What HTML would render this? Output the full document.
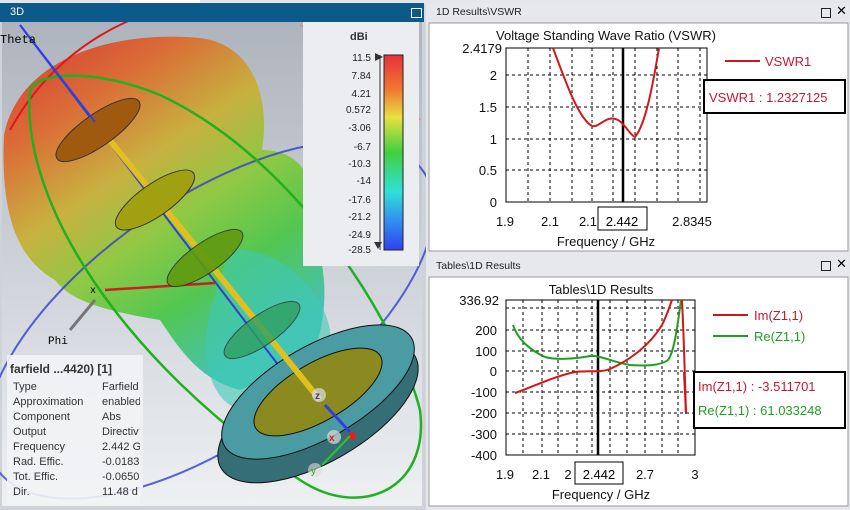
<!DOCTYPE html>
<html><head><meta charset="utf-8"><style>
html,body{margin:0;width:850px;height:510px;overflow:hidden}
body{background:#d8dce2;font-family:"Liberation Sans",sans-serif;position:relative}
.abs{position:absolute}
</style></head><body>
<div class="abs" style="left:0;top:0;width:850px;height:4px;background:#e4e7ea"></div>
<div class="abs" style="left:120px;top:0;width:80px;height:3px;background:#fff"></div>
<div class="abs" style="left:0;top:3px;width:424px;height:19px;background:#0b5a8a;color:#fff;font-size:11px;line-height:19px;padding-left:10px;box-sizing:border-box">3D</div>
<div class="abs" style="left:411px;top:8px;width:9px;height:8px;border:1px solid #fff"></div>
<svg class="abs" style="left:0;top:22px" width="426" height="488" viewBox="0 22 426 488">
<defs>
<linearGradient id="bg" x1="0" y1="0" x2="0" y2="1"><stop offset="0" stop-color="#aeb4bd"/><stop offset="0.6" stop-color="#d4d8de"/><stop offset="1" stop-color="#eef0f2"/></linearGradient>
<linearGradient id="lobe" x1="0" y1="0" x2="0.6" y2="1"><stop offset="0" stop-color="#d8302a"/><stop offset="0.25" stop-color="#dc6a30"/><stop offset="0.45" stop-color="#c8b038"/><stop offset="0.62" stop-color="#8cc83c"/><stop offset="0.8" stop-color="#4cc64a"/><stop offset="1" stop-color="#3ec0b0"/></linearGradient>
<linearGradient id="cb" x1="0" y1="0" x2="0" y2="1"><stop offset="0" stop-color="#e8303a"/><stop offset="0.18" stop-color="#f07a30"/><stop offset="0.32" stop-color="#e8e040"/><stop offset="0.5" stop-color="#40d040"/><stop offset="0.7" stop-color="#30e0d8"/><stop offset="0.85" stop-color="#3090f0"/><stop offset="1" stop-color="#3040f0"/></linearGradient>
</defs>
<rect x="0" y="22" width="426" height="488" fill="#cfd3d8"/>
<rect x="2" y="22" width="420" height="484" fill="url(#bg)"/>
<path d="M4 135 C20 55 120 30 200 38 C255 45 270 100 262 150 C300 150 320 180 305 215 C330 260 330 320 310 360 L240 390 C200 380 180 350 160 320 C100 310 70 300 55 280 C20 260 0 220 4 135Z" fill="url(#lobe)" opacity="0.95"/>
<path d="M230 250 C270 245 320 280 330 330 C335 380 290 420 240 410 C210 400 200 360 210 310Z" fill="#40c8b8" opacity="0.6"/>
<path d="M10 130 C60 40 140 10 200 0" stroke="#e01818" stroke-width="2" fill="none"/>
<path d="M300 25 C360 60 400 90 420 120" stroke="#e88080" stroke-width="1.5" fill="none"/>
<ellipse cx="210" cy="320" rx="260" ry="120" transform="rotate(-35 210 320)" stroke="#3040d0" stroke-width="2" fill="none" opacity="0.8"/>
<path d="M30 90 C20 200 120 360 300 480 C360 520 430 490 420 410 C400 330 300 160 160 95 C100 70 40 70 30 90Z" stroke="#20b020" stroke-width="2.5" fill="none"/>
<line x1="20" y1="25" x2="320" y2="420" stroke="#3040d0" stroke-width="2"/>
<path d="M105 290 L215 283" stroke="#cc2020" stroke-width="2.5"/>
<path d="M95 300 L70 330" stroke="#777" stroke-width="3"/>
<ellipse cx="318" cy="412" rx="112" ry="50" transform="rotate(-30 318 412)" fill="#356e74" stroke="#111"/>
<ellipse cx="318" cy="392" rx="108" ry="46" transform="rotate(-30 318 392)" fill="#4a9ca2" stroke="#111"/>
<ellipse cx="318" cy="392" rx="72" ry="29" transform="rotate(-30 318 392)" fill="#8a8a20" stroke="#111"/>
<line x1="95" y1="122" x2="320" y2="400" stroke="#e0c020" stroke-width="6"/>
<ellipse cx="98" cy="130" rx="50" ry="16" transform="rotate(-35 98 130)" fill="#a05a10" stroke="#333"/>
<ellipse cx="155" cy="200" rx="47" ry="16" transform="rotate(-35 155 200)" fill="#a0a010" stroke="#333"/>
<ellipse cx="205" cy="258" rx="45" ry="15" transform="rotate(-35 205 258)" fill="#609a10" stroke="#333" opacity="0.9"/>
<ellipse cx="262" cy="330" rx="45" ry="15" transform="rotate(-35 262 330)" fill="#30a060" stroke="#333" opacity="0.8"/>
<line x1="20" y1="25" x2="95" y2="122" stroke="#3040e0" stroke-width="2"/>
<text x="0" y="43" font-family="Liberation Mono" font-size="12">Theta</text>
<text x="90" y="293" font-family="Liberation Mono" font-size="10">x</text>
<text x="48" y="344" font-family="Liberation Mono" font-size="11">Phi</text>
<circle cx="319" cy="395" r="7" fill="#ddd" opacity="0.7"/><text x="315" y="399" font-size="10" fill="#33c" font-weight="bold">z</text>
<circle cx="334" cy="437" r="7" fill="#ddd" opacity="0.7"/><text x="329" y="441" font-size="10" fill="#c22" font-weight="bold">x</text>
<circle cx="352" cy="436" r="4" fill="#d22"/>
<circle cx="315" cy="470" r="7" fill="#ddd" opacity="0.6"/><text x="311" y="474" font-size="10" fill="#3a3">y</text>
<line x1="325" y1="405" x2="350" y2="432" stroke="#3040e0" stroke-width="3"/>
<line x1="350" y1="436" x2="322" y2="465" stroke="#30c030" stroke-width="2"/>
<rect x="303" y="22" width="116" height="244" fill="#ebedf0"/>
<text x="350" y="40" font-size="11" font-weight="bold" fill="#333">dBi</text>
<rect x="384" y="55" width="19" height="195" fill="url(#cb)" stroke="#222"/>
<g font-size="10" fill="#222" text-anchor="end">
<text x="371" y="61">11.5</text><text x="371" y="79">7.84</text><text x="371" y="97">4.21</text><text x="371" y="113">0.572</text><text x="371" y="131">-3.06</text><text x="371" y="150">-6.7</text><text x="371" y="167">-10.3</text><text x="371" y="184">-14</text><text x="371" y="203">-17.6</text><text x="371" y="220">-21.2</text><text x="371" y="238">-24.9</text><text x="371" y="253">-28.5</text>
</g>
<line x1="380" y1="55" x2="380" y2="250" stroke="#333"/>
<path d="M375 53 L383 57 L375 61Z M374 242 L382 242 L378 249Z" fill="#333"/>
<rect x="7" y="355" width="133" height="150" fill="#f2f3f5" opacity="0.9"/>
<text x="10" y="373" font-size="12" font-weight="bold" fill="#333">farfield ...4420) [1]</text>
<g font-size="11" fill="#333">
<text x="13" y="390">Type</text><text x="102" y="390">Farfield</text>
<text x="13" y="405">Approximation</text><text x="102" y="405">enabled</text>
<text x="13" y="420">Component</text><text x="102" y="420">Abs</text>
<text x="13" y="435">Output</text><text x="102" y="435">Directiv</text>
<text x="13" y="450">Frequency</text><text x="102" y="450">2.442 G</text>
<text x="13" y="465">Rad. Effic.</text><text x="102" y="465">-0.0183</text>
<text x="13" y="480">Tot. Effic.</text><text x="102" y="480">-0.0650</text>
<text x="13" y="495">Dir.</text><text x="102" y="495">11.48 d</text>
</g>
<rect x="140" y="355" width="3" height="150" fill="#eef0f2"/>
</svg>
<div class="abs" style="left:426px;top:3px;width:424px;height:507px;background:#e6e8eb"></div>
<div class="abs" style="left:436px;top:6px;font-size:10.5px;color:#222">1D Results\VSWR</div>
<div class="abs" style="left:821px;top:8px;width:8px;height:8px;border:1px solid #222"></div>
<div class="abs" style="left:836px;top:3px;font-size:13px">✕</div>
<div class="abs" style="left:436px;top:260px;font-size:10.5px;color:#222">Tables\1D Results</div>
<div class="abs" style="left:821px;top:261px;width:8px;height:8px;border:1px solid #222"></div>
<div class="abs" style="left:836px;top:256px;font-size:13px">✕</div>
<svg class="abs" style="left:428px;top:22px" width="422" height="488" viewBox="428 22 422 488">
<rect x="429" y="23" width="419" height="228" fill="#fff" stroke="#999"/>
<rect x="429" y="277" width="419" height="229" fill="#fff" stroke="#999"/>
<g stroke="#000" stroke-dasharray="3,3" stroke-width="1">
<line x1="528" y1="48" x2="528" y2="202"/><line x1="550" y1="48" x2="550" y2="202"/><line x1="572" y1="48" x2="572" y2="202"/><line x1="592" y1="48" x2="592" y2="202"/><line x1="613" y1="48" x2="613" y2="202"/><line x1="635" y1="48" x2="635" y2="202"/><line x1="657" y1="48" x2="657" y2="202"/><line x1="678" y1="48" x2="678" y2="202"/><line x1="700" y1="48" x2="700" y2="202"/>
<line x1="506" y1="75" x2="707" y2="75"/><line x1="506" y1="107" x2="707" y2="107"/><line x1="506" y1="139" x2="707" y2="139"/><line x1="506" y1="170" x2="707" y2="170"/>
</g>
<rect x="506" y="48" width="201" height="154" fill="none" stroke="#000"/>
<line x1="623" y1="48" x2="623" y2="202" stroke="#000" stroke-width="2.5"/>
<path d="M553 48 C565 80 578 118 592 126 C600 128 606 114 618 120 C625 124 630 135 635 137 C645 125 652 90 659 48" stroke="#d01818" stroke-width="2" fill="none"/>
<g font-size="13" fill="#111">
<text x="606" y="40" text-anchor="middle">Voltage Standing Wave Ratio (VSWR)</text>
<g text-anchor="end"><text x="502" y="53">2.4179</text><text x="497" y="80">2</text><text x="497" y="112">1.5</text><text x="497" y="144">1</text><text x="497" y="175">0.5</text><text x="497" y="207">0</text></g>
<text x="505" y="226" text-anchor="middle">1.9</text><text x="550" y="226" text-anchor="middle">2.1</text><text x="588" y="226" text-anchor="middle">2.1</text><text x="692" y="226" text-anchor="middle">2.8345</text>
<text x="606" y="246" text-anchor="middle">Frequency / GHz</text>
</g>
<rect x="598" y="207" width="49" height="23" fill="#fff" stroke="#000"/>
<text x="622" y="226" font-size="13" text-anchor="middle">2.442</text>
<line x1="725" y1="61" x2="760" y2="61" stroke="#d01818" stroke-width="2"/>
<text x="765" y="66" font-size="13" fill="#c81830">VSWR1</text>
<rect x="704" y="80" width="141" height="33" fill="#fff" stroke="#000" stroke-width="2"/>
<text x="709" y="102" font-size="13" fill="#c81830">VSWR1 : 1.2327125</text>
<g stroke="#000" stroke-dasharray="3,3">
<line x1="523" y1="300" x2="523" y2="455"/><line x1="542" y1="300" x2="542" y2="455"/><line x1="558" y1="300" x2="558" y2="455"/><line x1="577" y1="300" x2="577" y2="455"/><line x1="592" y1="300" x2="592" y2="455"/><line x1="610" y1="300" x2="610" y2="455"/><line x1="627" y1="300" x2="627" y2="455"/><line x1="645" y1="300" x2="645" y2="455"/><line x1="662" y1="300" x2="662" y2="455"/><line x1="678" y1="300" x2="678" y2="455"/>
<line x1="506" y1="308" x2="695" y2="308"/><line x1="506" y1="330" x2="695" y2="330"/><line x1="506" y1="351" x2="695" y2="351"/><line x1="506" y1="371" x2="695" y2="371"/><line x1="506" y1="392" x2="695" y2="392"/><line x1="506" y1="413" x2="695" y2="413"/><line x1="506" y1="434" x2="695" y2="434"/>
</g>
<rect x="506" y="300" width="189" height="155" fill="none" stroke="#000"/>
<line x1="598" y1="300" x2="598" y2="455" stroke="#000" stroke-width="2.5"/>
<path d="M513 325 C518 340 530 350 545 357 C555 360 575 359 590 356 C600 355 612 362 630 365 C645 366 660 366 668 360 C674 352 677 330 681 300" stroke="#20a020" stroke-width="2" fill="none"/>
<path d="M515 393 C530 388 555 376 575 372 C590 370 600 373 610 369 C630 360 650 345 662 325 C667 315 670 305 672 300 M682 300 C684 340 685 380 686 414" stroke="#d01818" stroke-width="2" fill="none"/>
<g font-size="13" fill="#111">
<text x="601" y="294" text-anchor="middle">Tables\1D Results</text>
<g text-anchor="end"><text x="499" y="305">336.92</text><text x="497" y="335">200</text><text x="497" y="356">100</text><text x="497" y="376">0</text><text x="497" y="397">-100</text><text x="497" y="418">-200</text><text x="497" y="439">-300</text><text x="497" y="460">-400</text></g>
<text x="505" y="479" text-anchor="middle">1.9</text><text x="541" y="479" text-anchor="middle">2.1</text><text x="568" y="479" text-anchor="middle">2</text><text x="645" y="479" text-anchor="middle">2.7</text><text x="695" y="479" text-anchor="middle">3</text>
<text x="601" y="499" text-anchor="middle">Frequency / GHz</text>
</g>
<rect x="575" y="462" width="48" height="22" fill="#fff" stroke="#000"/>
<text x="599" y="479" font-size="13" text-anchor="middle">2.442</text>
<line x1="713" y1="315" x2="748" y2="315" stroke="#c81818" stroke-width="2"/>
<text x="754" y="320" font-size="13" fill="#c81830">Im(Z1,1)</text>
<line x1="713" y1="336" x2="748" y2="336" stroke="#20a020" stroke-width="2"/>
<text x="754" y="341" font-size="13" fill="#20a020">Re(Z1,1)</text>
<rect x="694" y="372" width="151" height="56" fill="#fff" stroke="#000" stroke-width="2"/>
<text x="698" y="391" font-size="13" fill="#c81830">Im(Z1,1) : -3.511701</text>
<text x="698" y="415" font-size="13" fill="#20a020">Re(Z1,1) : 61.033248</text>
<line x1="684" y1="372" x2="686" y2="414" stroke="#d01818" stroke-width="2"/>
</svg>
</body></html>
